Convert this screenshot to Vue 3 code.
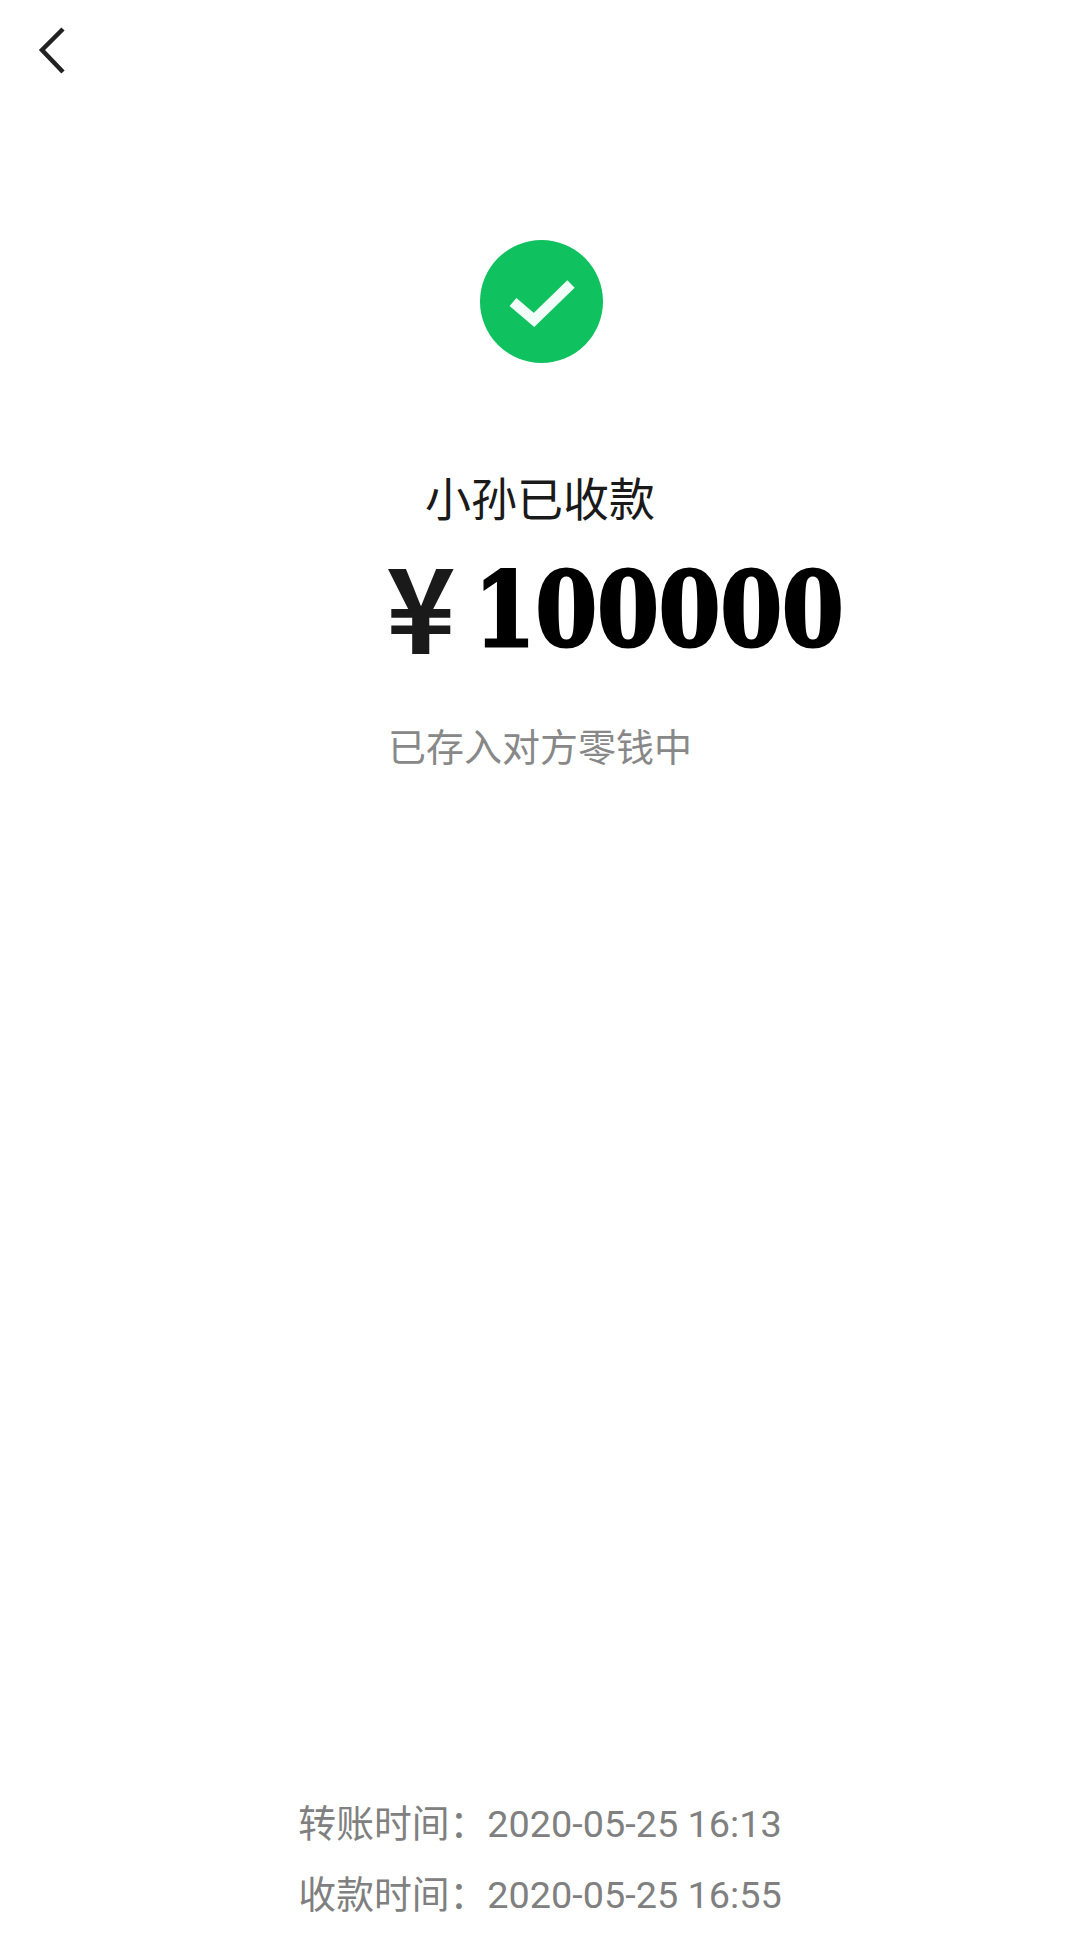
<script setup>
const times = [
  { label: '转账时间：', value: '2020-05-25 16:13' },
  { label: '收款时间：', value: '2020-05-25 16:55' },
]
</script>

<template>
  <div class="page">
    <div class="topbar">
      <svg class="back" width="80" height="64" viewBox="0 0 80 64" aria-hidden="true">
        <path d="M63 9 L42 30 L63 52" fill="none" stroke="#222" stroke-width="4.5" />
      </svg>
    </div>

    <div class="ok">
      <svg width="123" height="123" viewBox="0 0 123 123" aria-hidden="true">
        <circle cx="61.5" cy="61.5" r="61.5" fill="#10c160" />
        <path d="M33 62 L54 80 L91 44" fill="none" stroke="#f2fff8" stroke-width="10.5" />
      </svg>
    </div>

    <div class="title">小孙已收款</div>

    <div class="amount">
      <span class="yen">¥</span>
      <span class="num">100000</span>
    </div>

    <div class="sub">已存入对方零钱中</div>

    <div class="times">
      <div v-for="t in times" :key="t.label" class="time-row">{{ t.label }}{{ t.value }}</div>
    </div>
  </div>
</template>

<style scoped>
.page {
  width: 1080px;
  height: 1949px;
  background: #fff;
  display: flex;
  flex-direction: column;
  align-items: center;
  font-family: Roboto, "Noto Sans CJK SC", sans-serif;
  overflow: hidden;
}
.topbar {
  align-self: stretch;
  height: 240px;
  padding-top: 20px;
  box-sizing: border-box;
}
.back {
  display: block;
}
.ok {
  height: 123px;
  margin-left: 2px;
}
.ok svg {
  display: block;
}
.title {
  margin-top: 107px;
  font-size: 46px;
  line-height: 60px;
  color: #1a1a1a;
}
.amount {
  align-self: stretch;
  margin-top: 18px;
  padding-left: 386px;
  display: flex;
  align-items: center;
  gap: 18px;
  height: 120px;
}
.yen {
  font-family: "Noto Sans CJK SC", sans-serif;
  font-weight: 700;
  font-size: 118px;
  line-height: 120px;
  color: #1a1a1a;
  margin-top: -10px;
}
.num {
  font-family: "DejaVu Serif", serif;
  font-weight: 700;
  font-size: 102px;
  line-height: 120px;
  color: #000;
  -webkit-text-stroke: 3px #000;
  transform: scaleX(0.868);
  transform-origin: left center;
  margin-top: 4px;
}
.sub {
  margin-top: 55px;
  font-size: 38px;
  line-height: 50px;
  color: #888;
}
.times {
  margin-top: auto;
  padding-bottom: 18px;
  text-align: center;
}
.time-row {
  font-size: 37.8px;
  line-height: 71px;
  color: #808080;
  white-space: nowrap;
}
</style>
